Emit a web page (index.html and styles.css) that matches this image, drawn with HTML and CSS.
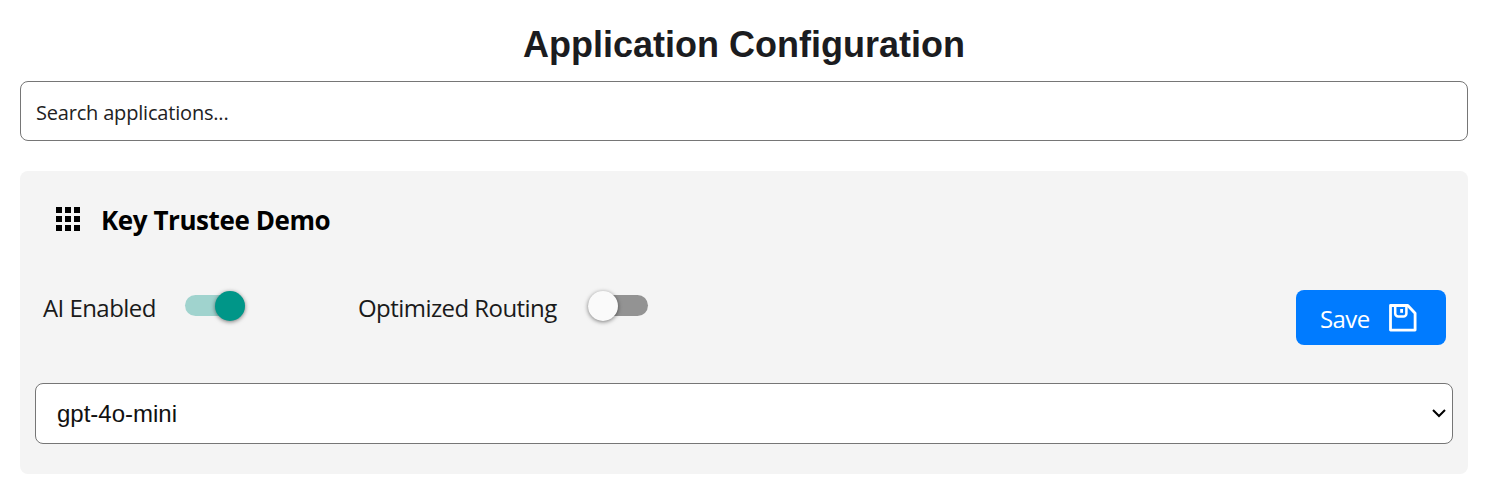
FILE: index.html
```html
<!DOCTYPE html>
<html lang="en">
<head>
<meta charset="utf-8">
<title>Application Configuration</title>
<link rel="stylesheet" href="styles.css">
</head>
<body>
<main class="page">
<h1 class="title">Application Configuration</h1>
<div class="search"><span class="search-text">Search applications...</span></div>
<section class="card">
<header class="card-header">
<svg class="grid-icon" viewBox="0 0 24 24" width="24" height="24"><path d="M0 0h6v6H0zM9 0h6v6H9zM18 0h6v6h-6zM0 9h6v6H0zM9 9h6v6H9zM18 9h6v6h-6zM0 18h6v6H0zM9 18h6v6H9zM18 18h6v6h-6z"/></svg>
<h2 class="app-name">Key Trustee Demo</h2>
</header>
<div class="controls">
<span class="label label-ai">AI Enabled</span>
<span class="toggle toggle-on"><span class="knob"></span></span>
<span class="label label-routing">Optimized Routing</span>
<span class="toggle"><span class="knob"></span></span>
<button class="save"><span class="save-text">Save</span>
<svg class="save-icon" viewBox="0 0 28 28" width="28" height="28" fill="none" stroke="#fff" stroke-width="2.8" stroke-linejoin="round"><path d="M1.5 1.5h17.3l7.3 7.8v16.8H1.5z"/><path d="M6.2 2v7.5a3 3 0 0 0 3 3h5.2a3 3 0 0 0 3-3V2" stroke-width="2.5"/><path d="M12.6 5v3.8" stroke-width="2.8"/></svg>
</button>
</div>
<div class="select"><span class="select-text">gpt-4o-mini</span>
<svg class="chevron" viewBox="0 0 14 9" width="14" height="9" fill="none" stroke="#000" stroke-width="2"><path d="M1 1l6 6 6-6"/></svg>
</div>
</section>
</main>
</body>
</html>
```
FILE: styles.css
```css
* { box-sizing: border-box; }
body { margin: 0; background: #fff; color: #000; font-family: "Open Sans", "Noto Sans", sans-serif; }
.page { padding: 20px 18px 0 20px; }
.title { margin: 0; height: 61px; text-align: center; font: bold 36px/50px "Liberation Sans", Arial, sans-serif; color: #1b1c20; }
.search { height: 60px; border: 1px solid #767676; border-radius: 8px; padding: 2px 0 0 15px; display: flex; align-items: center; font-size: 20px; letter-spacing: -.19px; color: #222; }
.card { margin-top: 30px; height: 303px; padding: 0 15px; background: #f4f4f4; border-radius: 8px; }
.card-header { display: flex; align-items: center; height: 98px; padding-left: 21px; gap: 21px; }
.grid-icon { margin-top: -2px; }
.app-name { margin: 0; font-size: 26px; font-weight: 700; letter-spacing: -.43px; }
.controls { display: flex; align-items: flex-start; height: 114px; padding: 21px 7px 0 8px; }
.label { font-size: 24px; line-height: 35px; letter-spacing: -.56px; white-space: nowrap; color: #1a1a1a; }
.label-ai { width: 142px; }
.label-routing { width: 230px; margin-left: 113px; }
.toggle { width: 60px; height: 21px; margin-top: 5px; border-radius: 11px; background: #939393; }
.knob { display: block; width: 30px; height: 30px; margin-top: -4px; border-radius: 50%; background: #fafafa; box-shadow: 0 1px 4px rgba(0,0,0,.5); }
.toggle-on { background: #a0d3ce; }
.toggle-on .knob { margin-left: 30px; background: #009688; }
.save { width: 150px; height: 55px; margin-left: auto; padding: 0 29px 0 24px; display: flex; align-items: center; justify-content: space-between; border: 0; border-radius: 8px; background: #007bff; color: #fff; font-family: inherit; font-size: 24px; letter-spacing: -.6px; }
.save-text { padding-top: 2px; }
.select { height: 61px; border: 1px solid #767676; border-radius: 8px; background: #fff; display: flex; align-items: center; justify-content: space-between; padding: 0 6px 0 21px; font-family: "Liberation Sans", Arial, sans-serif; font-size: 24px; color: #111; }
```
